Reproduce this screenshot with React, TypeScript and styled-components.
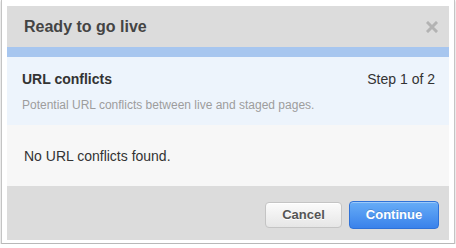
import React from "react";
import styled, { createGlobalStyle } from "styled-components";

const Global = createGlobalStyle`
  html, body { margin: 0; padding: 0; background: #ffffff; }
  body { font-family: "Liberation Sans", Arial, Helvetica, sans-serif; }
`;

const Frame = styled.div`
  box-sizing: border-box;
  margin-left: 1px;
  width: 454px;
  height: 244px;
  padding: 6px 4px 3px 5px;
  background: #ffffff;
  border-left: 1px solid #c4c4c4;
  border-right: 1px solid #c4c4c4;
  border-bottom: 1px solid #b8b8b8;
  box-shadow: 0 1px 2px rgba(0, 0, 0, 0.25);
`;

const Dialog = styled.div`
  width: 442px;
  height: 234px;
  display: flex;
  flex-direction: column;
  background: #dcdcdc;
`;

const Header = styled.div`
  height: 41px;
  box-sizing: border-box;
  padding: 0 10px 0 17px;
  display: flex;
  align-items: center;
  justify-content: space-between;
  background: #dcdcdc;
`;

const Title = styled.h1`
  margin: 0;
  font-size: 16px;
  font-weight: bold;
  color: #444444;
  line-height: 20px;
`;

const Close = styled.button`
  border: 0;
  background: none;
  padding: 0;
  width: 14px;
  height: 14px;
  display: flex;
  align-items: center;
  justify-content: center;
  cursor: pointer;
`;

const Progress = styled.div`
  height: 10px;
  background: #a7c6ef;
`;

const StepPanel = styled.div`
  height: 68px;
  box-sizing: border-box;
  padding: 13px 14px 0 15px;
  background: #edf4fc;
`;

const StepRow = styled.div`
  display: flex;
  justify-content: space-between;
  align-items: center;
  height: 17px;
`;

const StepTitle = styled.div`
  font-size: 14px;
  font-weight: bold;
  color: #333333;
`;

const StepCount = styled.div`
  font-size: 14px;
  color: #333333;
`;

const StepNote = styled.div`
  margin-top: 11px;
  font-size: 12px;
  color: #9d9d9d;
  line-height: 15px;
`;

const Body = styled.div`
  height: 61px;
  box-sizing: border-box;
  padding: 0 17px;
  display: flex;
  align-items: center;
  background: #f7f7f7;
  font-size: 14px;
  color: #333333;
`;

const Footer = styled.div`
  flex: 1;
  display: flex;
  justify-content: flex-end;
  align-items: center;
  gap: 7px;
  padding: 3px 10px 0 0;
  background: #dcdcdc;
`;

const Button = styled.button<{ $primary?: boolean }>`
  box-sizing: border-box;
  height: ${(p) => (p.$primary ? 28 : 26)}px;
  width: ${(p) => (p.$primary ? 90 : 77)}px;
  border-radius: 4px;
  font-family: "Liberation Sans", Arial, Helvetica, sans-serif;
  font-size: 13px;
  font-weight: bold;
  cursor: pointer;
  border: 1px solid ${(p) => (p.$primary ? "#2f72d8" : "#c4c4c4")};
  color: ${(p) => (p.$primary ? "#ffffff" : "#555555")};
  background: ${(p) =>
    p.$primary
      ? "linear-gradient(#67adf7, #3a82eb)"
      : "linear-gradient(#fbfbfb, #e6e6e6)"};
  box-shadow: ${(p) =>
    p.$primary
      ? "inset 0 1px 0 rgba(255,255,255,0.35)"
      : "inset 0 1px 0 #ffffff"};
  text-shadow: ${(p) =>
    p.$primary ? "0 -1px 0 rgba(0,0,0,0.15)" : "0 1px 0 #ffffff"};
`;

export default function App() {
  return (
    <>
      <Global />
      <Frame>
        <Dialog>
          <Header>
            <Title>Ready to go live</Title>
            <Close aria-label="Close">
              <svg width="12" height="12" viewBox="0 0 12 12">
                <path
                  d="M2 2 L10 10 M10 2 L2 10"
                  stroke="#b3b3b3"
                  strokeWidth="3"
                  strokeLinecap="square"
                />
              </svg>
            </Close>
          </Header>
          <Progress />
          <StepPanel>
            <StepRow>
              <StepTitle>URL conflicts</StepTitle>
              <StepCount>Step 1 of 2</StepCount>
            </StepRow>
            <StepNote>
              Potential URL conflicts between live and staged pages.
            </StepNote>
          </StepPanel>
          <Body>No URL conflicts found.</Body>
          <Footer>
            <Button>Cancel</Button>
            <Button $primary>Continue</Button>
          </Footer>
        </Dialog>
      </Frame>
    </>
  );
}
